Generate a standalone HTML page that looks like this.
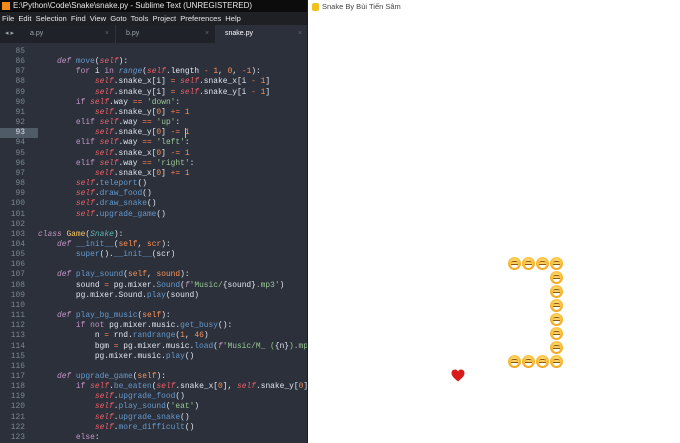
<!DOCTYPE html>
<html><head><meta charset="utf-8"><style>
*{margin:0;padding:0;box-sizing:border-box}
body{width:680px;height:443px;overflow:hidden;background:#fff;font-family:"Liberation Sans",sans-serif;position:relative}
#ed{position:absolute;left:0;top:0;width:308px;height:443px;background:#2b303b;overflow:hidden;border-right:1px solid #1a1d23}
#title{height:12px;background:#0c0c0c;color:#e8e8e8;font-size:8px;line-height:12px;padding-left:13px;position:relative;white-space:nowrap}
#title i{position:absolute;left:2px;top:2px;width:8px;height:8px;background:#f28a1c}
#menu{height:13px;background:#1e2024;color:#e6e6e6;font-size:7.6px;line-height:13px;padding-left:2px;white-space:nowrap;word-spacing:2px}
#tabs{height:18px;background:#1f2228;position:relative;font-size:7px;color:#9aa2ab}
.tab{position:absolute;top:0;height:18px;line-height:18px;padding-left:10px}
.tab b{position:absolute;right:6px;font-weight:normal;color:#666}
#code{position:absolute;top:47px;left:0;right:0;font-family:"Liberation Mono",monospace;font-size:7.9px;line-height:10.15px;color:#e0e6ef;white-space:pre}
.ln{display:inline-block;width:25px;text-align:right;color:#7a8590;padding-right:13px;box-sizing:content-box}
.hl{background:#4f5b66;color:#d8dee9}
.k{color:#c594c5;font-style:italic}.kw{color:#c594c5}.f{color:#6699cc}.s{color:#ec5f67;font-style:italic}
.st{color:#99c794}.n{color:#f99157}.o{color:#f97b58}.c{color:#fac863}.cl{color:#5fb3b3;font-style:italic}.b{color:#6699cc;font-style:italic}
#rt{position:absolute;left:322px;top:2px;font-size:7.5px;color:#444;white-space:nowrap}
#ri{position:absolute;left:312px;top:3px;width:7px;height:8px;background:#f0c020;border-radius:2px}
.e{position:absolute;width:13px;height:13px;border-radius:50%;background:radial-gradient(circle at 50% 35%,#ffe07a,#f7b52c 60%,#e08a10)}
.e:after{content:"";position:absolute;left:3px;top:7px;width:7px;height:3px;background:#fff;border-radius:0 0 4px 4px;border-top:1px solid #8a5a10}
.e:before{content:"";position:absolute;left:3px;top:4px;width:7px;height:2px;border-top:1px solid #8a4a10;border-radius:50%}
</style></head><body>
<div id="ed">
<div id="title"><i></i>E:\Python\Code\Snake\snake.py - Sublime Text (UNREGISTERED)</div>
<div id="menu">File Edit Selection Find View Goto Tools Project Preferences Help</div>
<div id="tabs"><span style="position:absolute;left:5px;top:0;line-height:18px;font-size:7px">◂ ▸</span>
<div class="tab" style="left:20px;width:95px">a.py<b>×</b></div>
<div class="tab" style="left:115px;width:100px;border-left:1px solid #333">b.py<b>×</b></div>
<div class="tab" style="left:215px;width:93px;background:#2b303b;color:#fff">snake.py<b>×</b></div></div>
<div id="code"><span class="ln">85</span>
<span class="ln">86</span>    <span class="k">def</span> <span class="f">move</span>(<span class="s">self</span>):
<span class="ln">87</span>        <span class="kw">for</span> i <span class="kw">in</span> <span class="b">range</span>(<span class="s">self</span>.length <span class="o">-</span> <span class="n">1</span>, <span class="n">0</span>, <span class="o">-</span><span class="n">1</span>):
<span class="ln">88</span>            <span class="s">self</span>.snake_x[i] <span class="o">=</span> <span class="s">self</span>.snake_x[i <span class="o">-</span> <span class="n">1</span>]
<span class="ln">89</span>            <span class="s">self</span>.snake_y[i] <span class="o">=</span> <span class="s">self</span>.snake_y[i <span class="o">-</span> <span class="n">1</span>]
<span class="ln">90</span>        <span class="kw">if</span> <span class="s">self</span>.way <span class="o">==</span> <span class="st">'down'</span>:
<span class="ln">91</span>            <span class="s">self</span>.snake_y[<span class="n">0</span>] <span class="o">+=</span> <span class="n">1</span>
<span class="ln">92</span>        <span class="kw">elif</span> <span class="s">self</span>.way <span class="o">==</span> <span class="st">'up'</span>:
<span class="ln hl">93</span>            <span class="s">self</span>.snake_y[<span class="n">0</span>] <span class="o">-=</span> <span class="n">1</span>
<span class="ln">94</span>        <span class="kw">elif</span> <span class="s">self</span>.way <span class="o">==</span> <span class="st">'left'</span>:
<span class="ln">95</span>            <span class="s">self</span>.snake_x[<span class="n">0</span>] <span class="o">-=</span> <span class="n">1</span>
<span class="ln">96</span>        <span class="kw">elif</span> <span class="s">self</span>.way <span class="o">==</span> <span class="st">'right'</span>:
<span class="ln">97</span>            <span class="s">self</span>.snake_x[<span class="n">0</span>] <span class="o">+=</span> <span class="n">1</span>
<span class="ln">98</span>        <span class="s">self</span>.<span class="f">teleport</span>()
<span class="ln">99</span>        <span class="s">self</span>.<span class="f">draw_food</span>()
<span class="ln">100</span>        <span class="s">self</span>.<span class="f">draw_snake</span>()
<span class="ln">101</span>        <span class="s">self</span>.<span class="f">upgrade_game</span>()
<span class="ln">102</span>
<span class="ln">103</span><span class="k">class</span> <span class="c">Game</span>(<span class="cl">Snake</span>):
<span class="ln">104</span>    <span class="k">def</span> <span class="f">__init__</span>(<span class="n">self</span>, <span class="n">scr</span>):
<span class="ln">105</span>        <span class="f">super</span>().<span class="f">__init__</span>(scr)
<span class="ln">106</span>
<span class="ln">107</span>    <span class="k">def</span> <span class="f">play_sound</span>(<span class="n">self</span>, <span class="n">sound</span>):
<span class="ln">108</span>        sound <span class="o">=</span> pg.mixer.<span class="f">Sound</span>(<span class="k">f</span><span class="st">'Music/</span>{sound}<span class="st">.mp3'</span>)
<span class="ln">109</span>        pg.mixer.Sound.<span class="f">play</span>(sound)
<span class="ln">110</span>
<span class="ln">111</span>    <span class="k">def</span> <span class="f">play_bg_music</span>(<span class="n">self</span>):
<span class="ln">112</span>        <span class="kw">if</span> <span class="kw">not</span> pg.mixer.music.<span class="f">get_busy</span>():
<span class="ln">113</span>            n <span class="o">=</span> rnd.<span class="f">randrange</span>(<span class="n">1</span>, <span class="n">46</span>)
<span class="ln">114</span>            bgm <span class="o">=</span> pg.mixer.music.<span class="f">load</span>(<span class="k">f</span><span class="st">'Music/M_ (</span>{n}<span class="st">).mp3</span>
<span class="ln">115</span>            pg.mixer.music.<span class="f">play</span>()
<span class="ln">116</span>
<span class="ln">117</span>    <span class="k">def</span> <span class="f">upgrade_game</span>(<span class="n">self</span>):
<span class="ln">118</span>        <span class="kw">if</span> <span class="s">self</span>.<span class="f">be_eaten</span>(<span class="s">self</span>.snake_x[<span class="n">0</span>], <span class="s">self</span>.snake_y[<span class="n">0</span>],
<span class="ln">119</span>            <span class="s">self</span>.<span class="f">upgrade_food</span>()
<span class="ln">120</span>            <span class="s">self</span>.<span class="f">play_sound</span>(<span class="st">'eat'</span>)
<span class="ln">121</span>            <span class="s">self</span>.<span class="f">upgrade_snake</span>()
<span class="ln">122</span>            <span class="s">self</span>.<span class="f">more_difficult</span>()
<span class="ln">123</span>        <span class="kw">else</span>:</div>
<div style="position:absolute;left:185px;top:128px;width:1px;height:10px;background:#f9ae58"></div>
</div>
<div id="ri"></div><div id="rt">Snake By Bùi Tiến Sâm</div>
<div class="e" style="left:508px;top:257px"></div><div class="e" style="left:522px;top:257px"></div><div class="e" style="left:536px;top:257px"></div><div class="e" style="left:550px;top:257px"></div>
<div class="e" style="left:550px;top:271px"></div><div class="e" style="left:550px;top:285px"></div><div class="e" style="left:550px;top:299px"></div><div class="e" style="left:550px;top:313px"></div><div class="e" style="left:550px;top:327px"></div><div class="e" style="left:550px;top:341px"></div>
<div class="e" style="left:508px;top:355px"></div><div class="e" style="left:522px;top:355px"></div><div class="e" style="left:536px;top:355px"></div><div class="e" style="left:550px;top:355px"></div>
<svg style="position:absolute;left:451px;top:369px" width="14" height="13" viewBox="0 0 14 13"><path d="M7 12.5 C3 9 0.5 7 0.5 4 C0.5 2 2 0.5 4 0.5 C5.5 0.5 6.5 1.5 7 2.5 C7.5 1.5 8.5 0.5 10 0.5 C12 0.5 13.5 2 13.5 4 C13.5 7 11 9 7 12.5Z" fill="#d91a1a"/></svg>
</body></html>
